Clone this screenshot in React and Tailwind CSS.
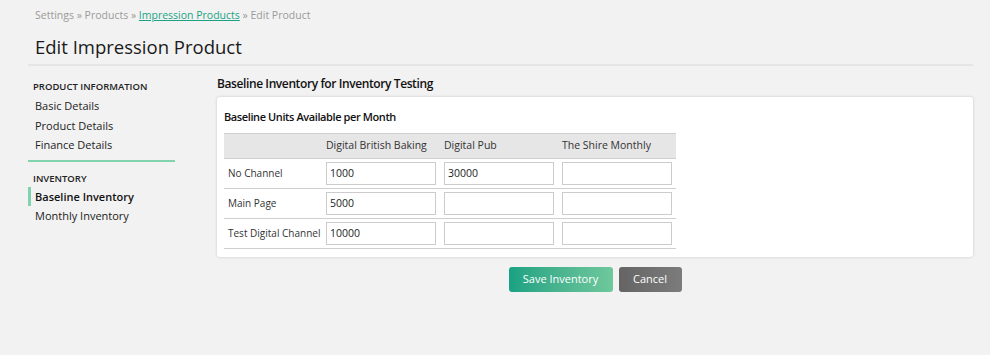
import React from "react";

const cols = ["Digital British Baking", "Digital Pub", "The Shire Monthly"];
const rows = [
  { name: "No Channel", vals: ["1000", "30000", ""] },
  { name: "Main Page", vals: ["5000", "", ""] },
  { name: "Test Digital Channel", vals: ["10000", "", ""] },
];

export default function App() {
  return (
    <div
      className="min-h-[355px] w-[990px] bg-[#f2f2f2] text-[#222]"
      style={{ fontFamily: '"Open Sans", "Noto Sans", sans-serif' }}
    >
      <div className="pl-[28px] pr-[17px]">
        <div className="pl-[7px] pt-[7px] text-[10.5px] leading-[16px] text-[#9a9a9a]">
          Settings » Products »{" "}
          <a className="text-[#1aa383] underline">Impression Products</a> » Edit Product
        </div>
        <h1 className="pl-[7px] pt-[10px] text-[18.5px] leading-[28px] text-[#1a1a1a]">
          Edit Impression Product
        </h1>
        <div className="mt-[3px] h-[2px] bg-[#e5e5e5]" />
        <div className="flex pt-[14px]">
          <div className="w-[147px] shrink-0">
            <div className="pl-[5px] text-[9.5px] font-semibold uppercase leading-[14px] text-[#222]">
              Product Information
            </div>
            <div className="mt-[2px] flex flex-col text-[11px] leading-[19.5px] text-[#222]">
              <div className="pl-[7px]">Basic Details</div>
              <div className="pl-[7px]">Product Details</div>
              <div className="pl-[7px]">Finance Details</div>
            </div>
            <div className="mt-[5px] h-[2px] bg-[#80d3ac]" />
            <div className="mt-[10px] pl-[5px] text-[9.5px] font-semibold uppercase leading-[14px] text-[#222]">
              Inventory
            </div>
            <div className="mt-[1px] flex flex-col text-[11px] leading-[19.5px]">
              <div className="border-l-[3px] border-[#80d3ac] pl-[4px] font-semibold text-[#111]">
                Baseline Inventory
              </div>
              <div className="pl-[7px]">Monthly Inventory</div>
            </div>
          </div>
          <div className="ml-[42px] flex-1">
            <div className="-mt-[5px] text-[12px] font-semibold leading-[18px] tracking-[-0.4px] text-[#111]">
              Baseline Inventory for Inventory Testing
            </div>
            <div className="mt-[4px] rounded-[3px] bg-white pb-[8px] pl-[7px] pt-[11px] shadow-[0_0_3px_rgba(0,0,0,0.18)]">
              <div className="text-[11px] font-semibold leading-[18px] tracking-[-0.4px] text-[#111]">
                Baseline Units Available per Month
              </div>
              <table className="mt-[7px] w-[452px] table-fixed border-collapse text-[10.5px] text-[#333]">
                <colgroup>
                  <col className="w-[98px]" />
                  <col className="w-[118px]" />
                  <col className="w-[118px]" />
                  <col className="w-[118px]" />
                </colgroup>
                <thead>
                  <tr className="h-[25px] border-y border-[#cfcfcf] bg-[#e6e6e6]">
                    <th className="p-0" />
                    {cols.map((c) => (
                      <th key={c} className="whitespace-nowrap px-[4px] py-0 text-left font-normal">
                        {c}
                      </th>
                    ))}
                  </tr>
                </thead>
                <tbody>
                  {rows.map((r) => (
                    <tr key={r.name} className="h-[30px] border-b border-[#cfcfcf]">
                      <td className="whitespace-nowrap py-0 pl-[4px] pr-0 text-[10px]">{r.name}</td>
                      {r.vals.map((v, i) => (
                        <td key={i} className="px-[4px] py-0">
                          <div className="flex h-[23px] w-[110px] items-center border border-[#cccccc] bg-white px-[3px] text-[#222]">
                            {v}
                          </div>
                        </td>
                      ))}
                    </tr>
                  ))}
                </tbody>
              </table>
            </div>
            <div className="mt-[10px] flex justify-center gap-[6px]">
              <button className="h-[25px] w-[104px] rounded-[3px] bg-gradient-to-r from-[#17a283] to-[#6ec89c] text-[11px] text-white">
                Save Inventory
              </button>
              <button className="h-[25px] w-[63px] rounded-[3px] bg-gradient-to-r from-[#646464] to-[#7c7c7c] text-[11px] text-white">
                Cancel
              </button>
            </div>
          </div>
        </div>
      </div>
    </div>
  );
}
